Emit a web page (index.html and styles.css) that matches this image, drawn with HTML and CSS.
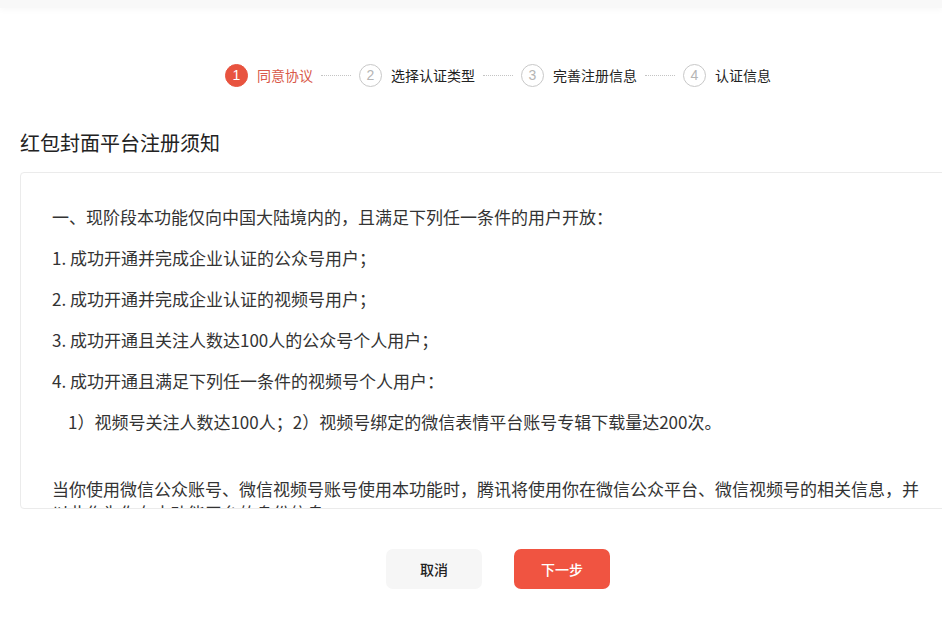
FILE: index.html
```html
<!DOCTYPE html>
<html lang="zh">
<head>
<meta charset="utf-8">
<link rel="stylesheet" href="styles.css">
</head>
<body>
<div class="topbar"></div>
<div class="steps">
  <div class="step active"><span class="num">1</span><span class="label">同意协议</span></div>
  <span class="dots"></span>
  <div class="step"><span class="num">2</span><span class="label">选择认证类型</span></div>
  <span class="dots"></span>
  <div class="step"><span class="num">3</span><span class="label">完善注册信息</span></div>
  <span class="dots"></span>
  <div class="step"><span class="num">4</span><span class="label">认证信息</span></div>
</div>
<h1 class="title">红包封面平台注册须知</h1>
<div class="notice">
  <div class="notice-inner">
    <p>一、现阶段本功能仅向中国大陆境内的，且满足下列任一条件的用户开放：</p>
    <p>1. 成功开通并完成企业认证的公众号用户；</p>
    <p>2. 成功开通并完成企业认证的视频号用户；</p>
    <p>3. 成功开通且关注人数达100人的公众号个人用户；</p>
    <p>4. 成功开通且满足下列任一条件的视频号个人用户：</p>
    <p class="indent">1）视频号关注人数达100人；2）视频号绑定的微信表情平台账号专辑下载量达200次。</p>
    <p class="gap">当你使用微信公众账号、微信视频号账号使用本功能时，腾讯将使用你在微信公众平台、微信视频号的相关信息，并以此作为你在本功能平台的身份信息。</p>
  </div>
</div>
<div class="actions">
  <button class="btn cancel">取消</button>
  <button class="btn primary">下一步</button>
</div>
</body>
</html>
```
FILE: styles.css
```css
html, body {
  margin: 0;
  padding: 0;
  background: #fff;
  overflow: hidden;
}
body {
  font-family: "Noto Sans CJK SC", "Noto Sans", sans-serif;
  color: #333;
  width: 942px;
  height: 628px;
}
.topbar {
  height: 8px;
  background: #f8f8f8;
  box-shadow: 0 2px 6px rgba(0,0,0,0.03);
}
.steps {
  display: flex;
  align-items: center;
  justify-content: center;
  margin-top: 55px;
  padding-left: 54px;
  height: 24px;
}
.step {
  display: flex;
  align-items: center;
  gap: 9px;
}
.num {
  width: 21px;
  height: 21px;
  border: 1px solid #c8c8c8;
  border-radius: 50%;
  display: flex;
  align-items: center;
  justify-content: center;
  font-family: "Liberation Sans", Arial, sans-serif;
  font-size: 14px;
  color: #b5b5b5;
  box-sizing: content-box;
}
.step.active .num {
  background: #e8533f;
  border-color: #e8533f;
  color: #fff;
}
.label {
  font-size: 14px;
  color: #222;
}
.step.active .label {
  color: #d9594a;
}
.dots {
  width: 30px;
  border-top: 1px dotted #c4c4c4;
  margin: 0 8px 0 8px;
}
.title {
  margin: 42px 0 0 20px;
  font-size: 20px;
  font-weight: normal;
  color: #222;
  line-height: 28px;
}
.notice {
  margin: 15px -12px 0 20px;
  height: 335px;
  border: 1px solid #ebebeb;
  border-radius: 4px;
  overflow: hidden;
}
.notice-inner {
  padding: 32px 0 0 31px;
  font-size: 17px;
  line-height: 24px;
  color: #333;
}
.notice-inner p {
  margin: 0 0 17px 0;
  width: 870px;
}
.notice-inner p.indent {
  padding-left: 16px;
}
.notice-inner p.gap {
  margin-top: 43px;
}
.actions {
  display: flex;
  justify-content: center;
  gap: 32px;
  margin-top: 40px;
  padding-left: 54px;
}
.btn {
  width: 96px;
  height: 40px;
  border: none;
  border-radius: 7px;
  font-family: "Noto Sans CJK SC", sans-serif;
  font-size: 14px;
  font-weight: 500;
}
.cancel {
  background: #f6f6f6;
  color: #222;
}
.primary {
  background: #f05441;
  color: #fff;
}
```
